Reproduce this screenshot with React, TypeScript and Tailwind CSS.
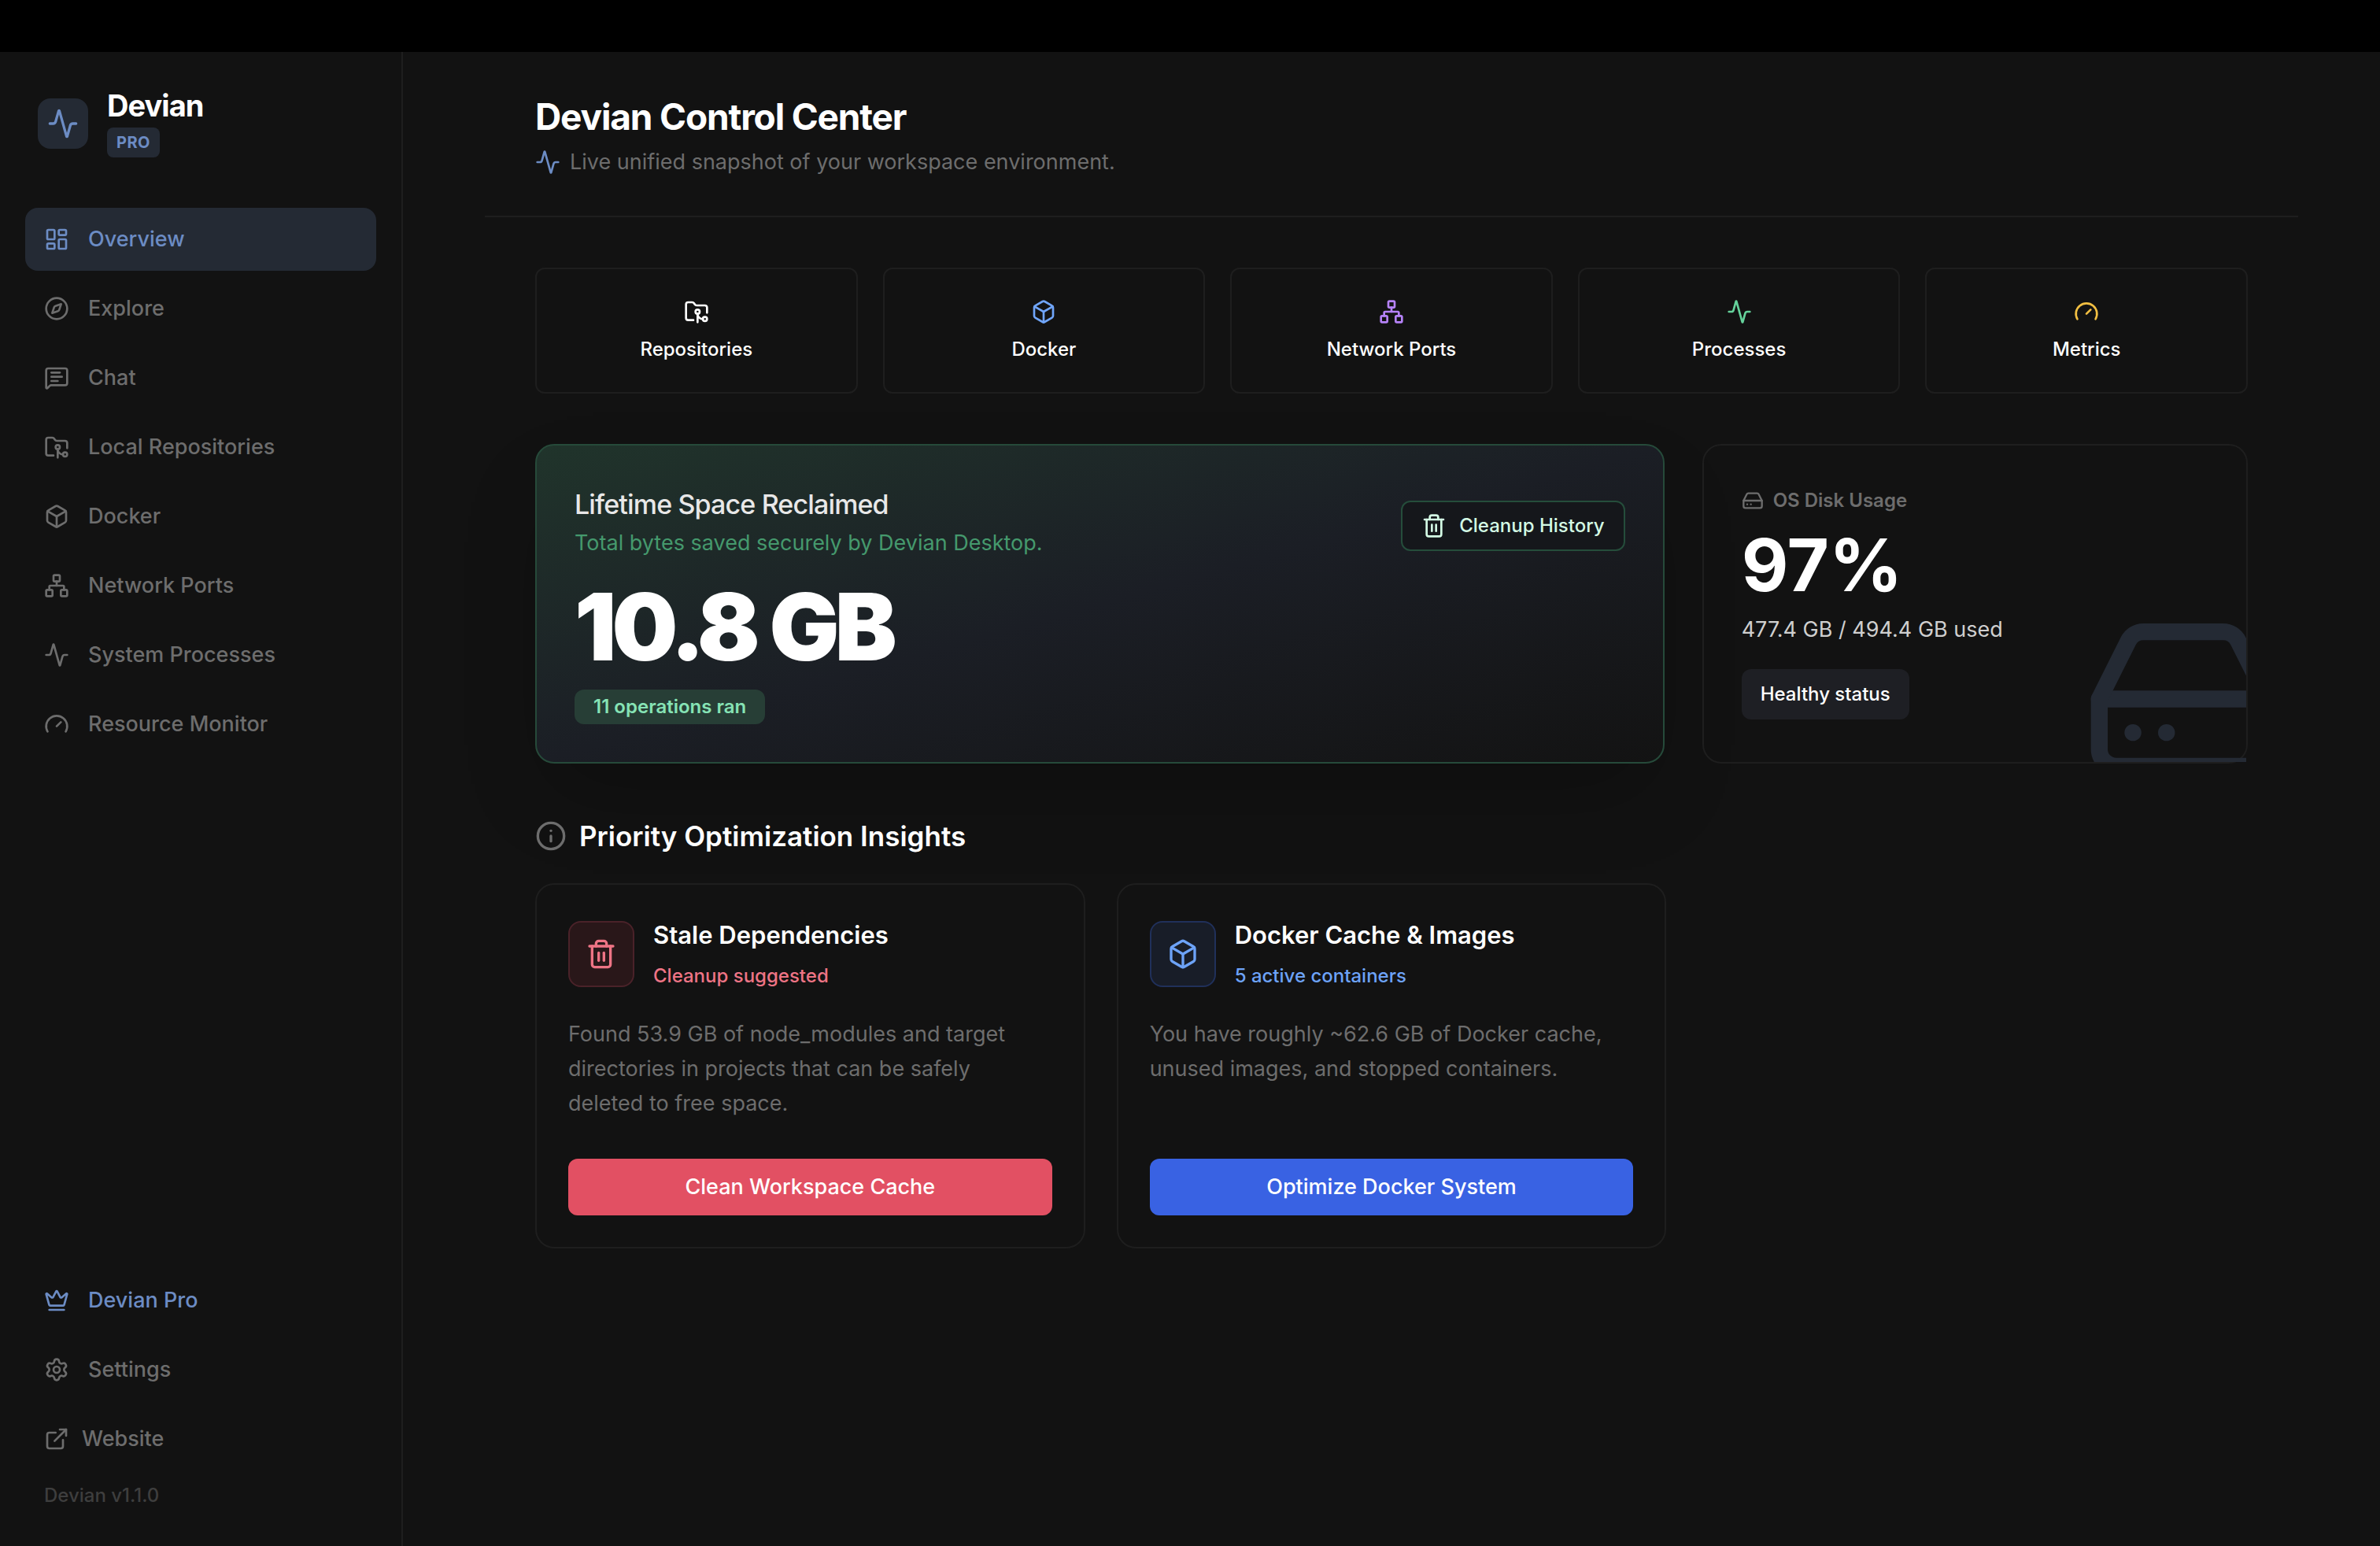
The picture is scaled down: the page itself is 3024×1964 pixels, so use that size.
import type { ReactNode } from "react";
import {
  Activity,
  Box,
  Compass,
  Crown,
  ExternalLink,
  FolderGit2,
  Gauge,
  HardDrive,
  Info,
  LayoutDashboard,
  MessageSquareText,
  Network,
  Settings,
  Trash2,
  type LucideIcon,
} from "lucide-react";

type NavItemProps = {
  icon: LucideIcon;
  label: string;
  className: string;
};

const navItems = [
  { icon: LayoutDashboard, label: "Overview", active: true },
  { icon: Compass, label: "Explore" },
  { icon: MessageSquareText, label: "Chat" },
  { icon: FolderGit2, label: "Local Repositories" },
  { icon: Box, label: "Docker" },
  { icon: Network, label: "Network Ports" },
  { icon: Activity, label: "System Processes" },
  { icon: Gauge, label: "Resource Monitor" },
];

const shortcuts = [
  { icon: FolderGit2, label: "Repositories", color: "text-white" },
  { icon: Box, label: "Docker", color: "text-[#70a5fa]" },
  { icon: Network, label: "Network Ports", color: "text-[#b582f7]" },
  { icon: Activity, label: "Processes", color: "text-[#65d29b]" },
  { icon: Gauge, label: "Metrics", color: "text-[#f2bf42]" },
];

function NavItem({ icon: Icon, label, className }: NavItemProps) {
  return (
    <a href="#" className={`flex h-20 items-center rounded-2xl px-6 text-[27px] font-medium ${className}`}>
      <Icon className="size-8" />
      <span>{label}</span>
    </a>
  );
}

function Sidebar() {
  return (
    <aside className="flex w-[512px] shrink-0 flex-col border-r-2 border-[#1e1e1e] px-8 py-12">
      <div className="flex items-center gap-6 px-4">
        <div className="flex size-16 items-center justify-center rounded-2xl bg-[#242a34] text-[#6c8cc4]">
          <Activity className="size-10" />
        </div>
        <div className="flex flex-col items-start gap-2">
          <p className="text-[38px] leading-10 font-bold tracking-tight text-white">Devian</p>
          <span className="rounded-lg bg-[#242a34] px-3 text-[20px] leading-[38px] font-bold tracking-wide text-[#6c8cc4]">
            PRO
          </span>
        </div>
      </div>

      <nav className="mt-16 flex flex-col gap-2">
        {navItems.map((item) => (
          <NavItem
            key={item.label}
            icon={item.icon}
            label={item.label}
            className={item.active ? "gap-6 bg-[#242a34] text-[#6c8cc4]" : "gap-6 text-[#6d6d6d]"}
          />
        ))}
      </nav>

      <div className="mt-auto flex flex-col gap-2">
        <NavItem icon={Crown} label="Devian Pro" className="gap-6 text-[#6c8cc4]" />
        <NavItem icon={Settings} label="Settings" className="gap-6 text-[#6d6d6d]" />
        <NavItem icon={ExternalLink} label="Website" className="gap-4 text-[#6d6d6d]" />
        <p className="mt-2 px-6 text-[24px] leading-8 font-medium text-[#3e3e3e]">Devian v1.1.0</p>
      </div>
    </aside>
  );
}

function ReclaimedCard() {
  return (
    <section className="col-span-2 rounded-3xl border-2 border-[#264a3a] bg-linear-to-br from-[#20342b] via-[#1b1e25] to-[#131313] p-12 shadow-[0_50px_100px_-24px_rgba(0,0,0,0.25)]">
      <div className="flex items-center justify-between">
        <div className="pb-2.5">
          <h2 className="text-[34px] leading-[54px] font-medium tracking-tight text-[#e8e8e8]">
            Lifetime Space Reclaimed
          </h2>
          <p className="text-[27px] leading-[44px] text-[#45996d]">Total bytes saved securely by Devian Desktop.</p>
        </div>
        <button className="flex h-16 items-center gap-4 rounded-xl border-2 border-[#254d3b] bg-[#15171b] px-6 text-[24px] font-medium text-[#d4fbe5]">
          <Trash2 className="size-8" />
          Cleanup History
        </button>
      </div>
      <p className="mt-3.5 text-[118px] leading-[120px] font-black tracking-tighter text-white">10.8 GB</p>
      <span className="mt-5 inline-block rounded-xl bg-[#273e36] px-6 align-top text-[24px] leading-[44px] font-semibold text-[#86e3b5]">
        11 operations ran
      </span>
    </section>
  );
}

function DiskCard() {
  return (
    <section className="relative rounded-3xl border-2 border-[#1e1e1e] p-12">
      <div className="absolute inset-0 overflow-hidden">
        <HardDrive className="absolute -right-12 -bottom-12 size-64 text-[#242a34]" />
      </div>
      <div className="flex flex-col items-start gap-3">
        <p className="flex items-center gap-3 text-[24px] leading-[44px] font-semibold text-[#6d6d6d]">
          <HardDrive className="size-7" />
          OS Disk Usage
        </p>
        <p className="text-[92px] leading-24 font-bold text-white">97%</p>
        <p className="text-[27px] leading-[44px] text-[#cfcfcf]">477.4 GB / 494.4 GB used</p>
        <span className="mt-4 rounded-xl bg-[#1e1f24] px-6 text-[24px] leading-16 font-medium text-white">
          Healthy status
        </span>
      </div>
    </section>
  );
}

type InsightCardProps = {
  icon: LucideIcon;
  iconClass: string;
  title: string;
  status: string;
  statusClass: string;
  action: string;
  actionClass: string;
  children: ReactNode;
};

function InsightCard(props: InsightCardProps) {
  const Icon = props.icon;
  return (
    <article className="flex flex-col rounded-3xl border-2 border-[#1e1e1e] p-10">
      <div className="flex items-center gap-6">
        <div className={`flex size-[84px] items-center justify-center rounded-2xl border-2 ${props.iconClass}`}>
          <Icon className="size-10" />
        </div>
        <div>
          <h3 className="text-[31px] leading-12 font-semibold text-white">{props.title}</h3>
          <p className={`mt-2 text-[24px] leading-10 font-medium ${props.statusClass}`}>{props.status}</p>
        </div>
      </div>
      <p className="mt-8 mb-12 pr-4 text-[27px] leading-[44px] text-[#6d6d6d]">{props.children}</p>
      <button className={`mt-auto h-18 rounded-xl text-[27px] font-medium text-white ${props.actionClass}`}>
        {props.action}
      </button>
    </article>
  );
}

export default function App() {
  return (
    <div className="flex min-h-screen flex-col bg-[#121212] font-['Inter',sans-serif]">
      <div className="h-[66px] bg-black" />
      <div className="flex grow">
        <Sidebar />
        <main className="grow">
          <div className="mx-auto max-w-[2304px]">
            <header className="border-b-2 border-[#1e1e1e] px-16 py-12">
              <h1 className="text-[46px] leading-[68px] font-bold tracking-tight text-white">Devian Control Center</h1>
              <p className="mt-1 flex items-center gap-3 text-[27px] leading-10 text-[#6d6d6d]">
                <Activity className="size-8 text-[#6c8cc4]" />
                Live unified snapshot of your workspace environment.
              </p>
            </header>

            <div className="p-16">
              <div className="grid grid-cols-5 gap-8">
                {shortcuts.map(({ icon: Icon, label, color }) => (
                  <button
                    key={label}
                    className="flex h-40 flex-col items-center justify-center gap-4 rounded-xl border-2 border-[#1e1e1e] text-[24px] leading-8 font-medium text-white"
                  >
                    <Icon className={`size-8 ${color}`} />
                    {label}
                  </button>
                ))}
              </div>

              <div className="mt-16 grid grid-cols-3 gap-12">
                <ReclaimedCard />
                <DiskCard />
              </div>

              <h2 className="mt-16 mb-8 flex items-center gap-4 text-[35px] leading-14 font-semibold text-white">
                <Info className="size-10 text-[#6d6d6d]" />
                Priority Optimization Insights
              </h2>

              <div className="grid grid-cols-3 gap-10">
                <InsightCard
                  icon={Trash2}
                  iconClass="border-[#4a2229] bg-[#291719] text-[#ee7485]"
                  title="Stale Dependencies"
                  status="Cleanup suggested"
                  statusClass="text-[#ee7485]"
                  action="Clean Workspace Cache"
                  actionClass="bg-[#e25063]"
                >
                  Found 53.9 GB of node_modules and target directories in projects that can be safely deleted to free
                  space.
                </InsightCard>
                <InsightCard
                  icon={Box}
                  iconClass="border-[#20305a] bg-[#181d28] text-[#6da3f8]"
                  title="Docker Cache & Images"
                  status="5 active containers"
                  statusClass="text-[#6da3f8]"
                  action="Optimize Docker System"
                  actionClass="bg-[#3962e3]"
                >
                  You have roughly ~62.6 GB of Docker cache, unused images, and stopped containers.
                </InsightCard>
              </div>
            </div>
          </div>
        </main>
      </div>
    </div>
  );
}
